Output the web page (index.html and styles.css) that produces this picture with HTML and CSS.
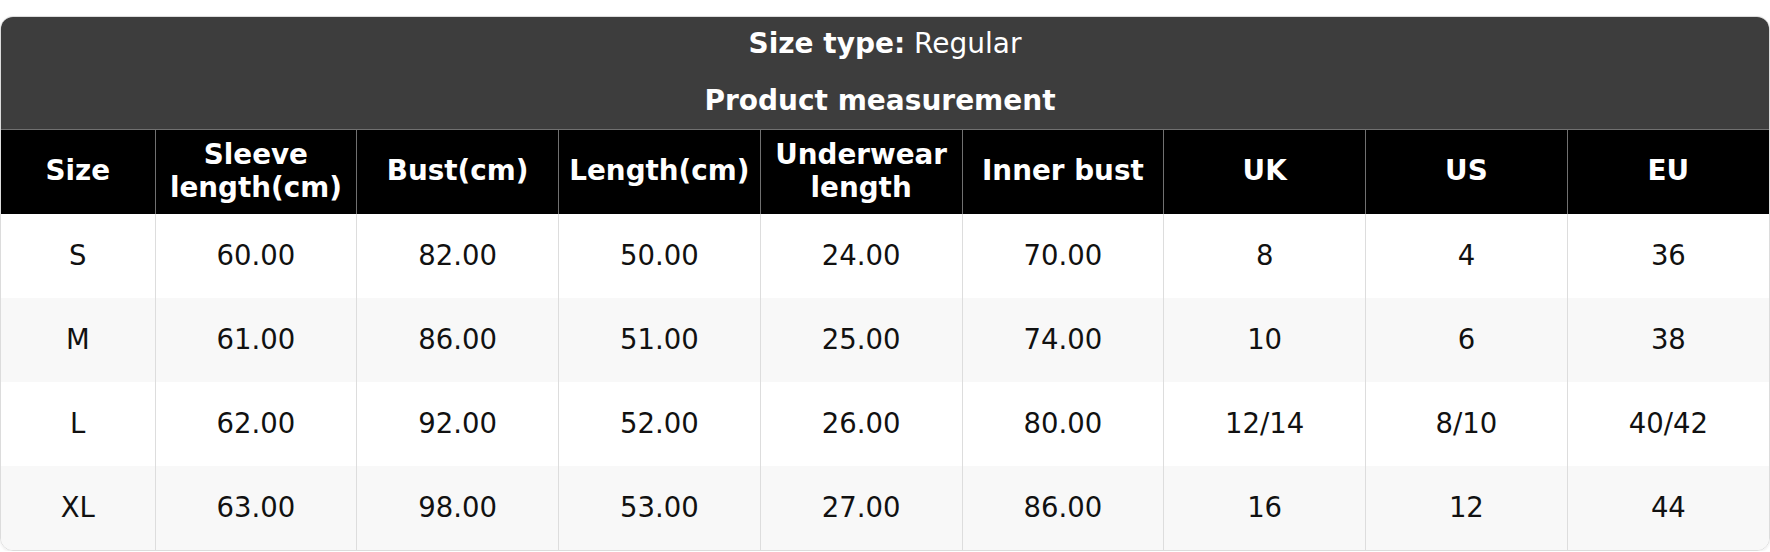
FILE: index.html
```html
<!DOCTYPE html>
<html lang="en">
<head>
<meta charset="utf-8">
<title>Size chart</title>
<link rel="stylesheet" href="styles.css">
</head>
<body>
<div class="chart">
  <div class="chart-head">
    <div class="chart-line"><strong>Size type:</strong> Regular</div>
    <div class="chart-line chart-line-sub"><strong>Product measurement</strong></div>
  </div>
  <table class="size-table">
    <colgroup>
      <col class="col-size">
      <col><col><col><col><col><col><col><col>
    </colgroup>
    <thead>
      <tr>
        <th>Size</th>
        <th>Sleeve<br>length(cm)</th>
        <th>Bust(cm)</th>
        <th>Length(cm)</th>
        <th>Underwear<br>length</th>
        <th>Inner bust</th>
        <th>UK</th>
        <th>US</th>
        <th>EU</th>
      </tr>
    </thead>
    <tbody>
      <tr><td>S</td><td>60.00</td><td>82.00</td><td>50.00</td><td>24.00</td><td>70.00</td><td>8</td><td>4</td><td>36</td></tr>
      <tr><td>M</td><td>61.00</td><td>86.00</td><td>51.00</td><td>25.00</td><td>74.00</td><td>10</td><td>6</td><td>38</td></tr>
      <tr><td>L</td><td>62.00</td><td>92.00</td><td>52.00</td><td>26.00</td><td>80.00</td><td>12/14</td><td>8/10</td><td>40/42</td></tr>
      <tr><td>XL</td><td>63.00</td><td>98.00</td><td>53.00</td><td>27.00</td><td>86.00</td><td>16</td><td>12</td><td>44</td></tr>
    </tbody>
  </table>
</div>
</body>
</html>
```

FILE: styles.css
```css
html, body {
  margin: 0;
  padding: 0;
  background: #ffffff;
}

body {
  font-family: "DejaVu Sans", sans-serif;
  font-size: 27.5px;
  color: #111111;
}

.chart {
  margin-top: 16px;
  border: 1px solid #dcdcdc;
  border-radius: 13px;
  overflow: hidden;
  box-shadow: 0 1px 3px rgba(0, 0, 0, 0.08);
}

.chart-head {
  background: #3d3d3d;
  color: #ffffff;
  text-align: center;
  font-size: 28px;
  padding: 10px 0 12px;
  display: flex;
  flex-direction: column;
  gap: 24px;
}

.chart-line {
  line-height: 33px;
  font-weight: normal;
}

.chart-line-sub {
  padding-right: 10px;
}

.chart-line strong {
  font-weight: bold;
}

.size-table {
  width: 100%;
  border-collapse: collapse;
  table-layout: fixed;
}

.col-size {
  width: 154px;
}

.size-table th {
  background: #000000;
  color: #ffffff;
  font-weight: bold;
  font-size: 27.8px;
  line-height: 32.5px;
  padding: 9px 4px 10px;
  border-left: 1px solid #707070;
  border-top: 1px solid #707070;
  text-align: center;
  vertical-align: middle;
}

.size-table th:first-child,
.size-table td:first-child {
  border-left: none;
}

.size-table td {
  text-align: center;
  line-height: 33px;
  padding: 25px 4px 26px;
  border-left: 1px solid #dddddd;
}

.size-table tbody tr:nth-child(even) td {
  background: #f8f8f8;
}
```
